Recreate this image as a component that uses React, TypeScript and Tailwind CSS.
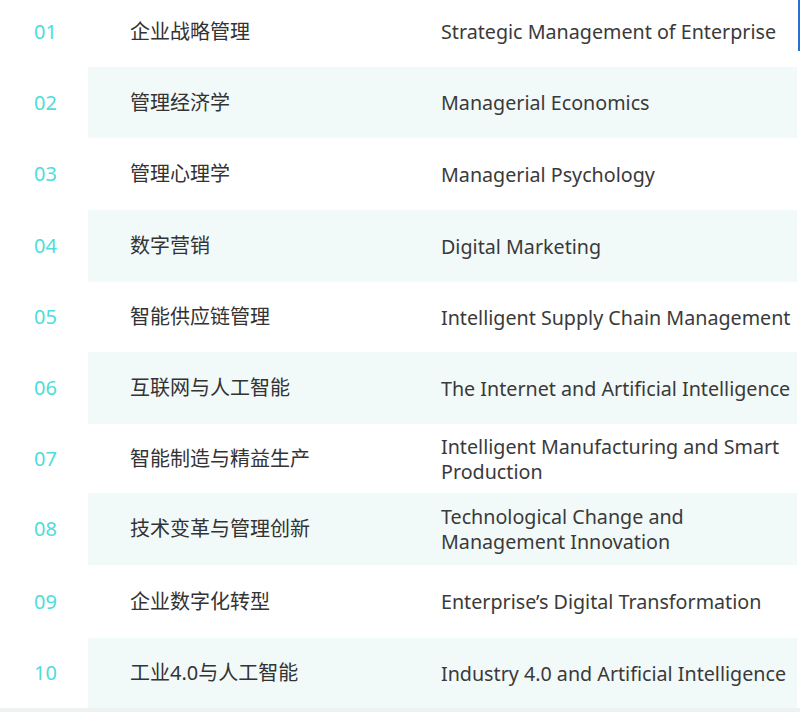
import React from 'react';

interface Course {
  no: string;
  zh: string;
  en: string;
  h: string;
}

const courses: Course[] = [
  { no: '01', zh: '企业战略管理', en: 'Strategic Management of Enterprise', h: 'h-[67px] pb-[4px]' },
  { no: '02', zh: '管理经济学', en: 'Managerial Economics', h: 'h-[71px]' },
  { no: '03', zh: '管理心理学', en: 'Managerial Psychology', h: 'h-[72px]' },
  { no: '04', zh: '数字营销', en: 'Digital Marketing', h: 'h-[72px]' },
  { no: '05', zh: '智能供应链管理', en: 'Intelligent Supply Chain Management', h: 'h-[70px]' },
  { no: '06', zh: '互联网与人工智能', en: 'The Internet and Artificial Intelligence', h: 'h-[72px]' },
  { no: '07', zh: '智能制造与精益生产', en: 'Intelligent Manufacturing and Smart Production', h: 'h-[69px]' },
  { no: '08', zh: '技术变革与管理创新', en: 'Technological Change and Management Innovation', h: 'h-[72px]' },
  { no: '09', zh: '企业数字化转型', en: 'Enterprise’s Digital Transformation', h: 'h-[73px]' },
  { no: '10', zh: '工业4.0与人工智能', en: 'Industry 4.0 and Artificial Intelligence', h: 'h-[70px]' },
];

const App: React.FC = () => {
  return (
    <div
      className="relative w-[800px] h-[712px] bg-white overflow-hidden"
      style={{ fontFamily: '"Noto Sans", "Noto Sans CJK SC", sans-serif' }}
    >
      <div className="flex flex-col w-[797px]">
        {courses.map((c, i) => (
          <div key={c.no} className={`flex items-stretch ${c.h}`}>
            <div className="w-[88px] shrink-0 flex items-center pl-[34px] text-[20px] text-[#4fdcdc]">
              {c.no}
            </div>
            <div className={`flex flex-1 items-center ${i % 2 === 1 ? 'bg-[#f2f9f9]' : 'bg-white'}`}>
              <div className="w-[353px] shrink-0 pl-[42px] text-[20px] text-[#333333]">{c.zh}</div>
              <div className="flex-1 text-[19.7px] leading-[25px] text-[#3a3a3a]">{c.en}</div>
            </div>
          </div>
        ))}
      </div>
      <div className="h-[4px] bg-[#eef1f1]" />
      <div className="absolute right-0 top-0 w-[2px] h-[51px] bg-[#2a6fd6]" />
    </div>
  );
};

export default App;
